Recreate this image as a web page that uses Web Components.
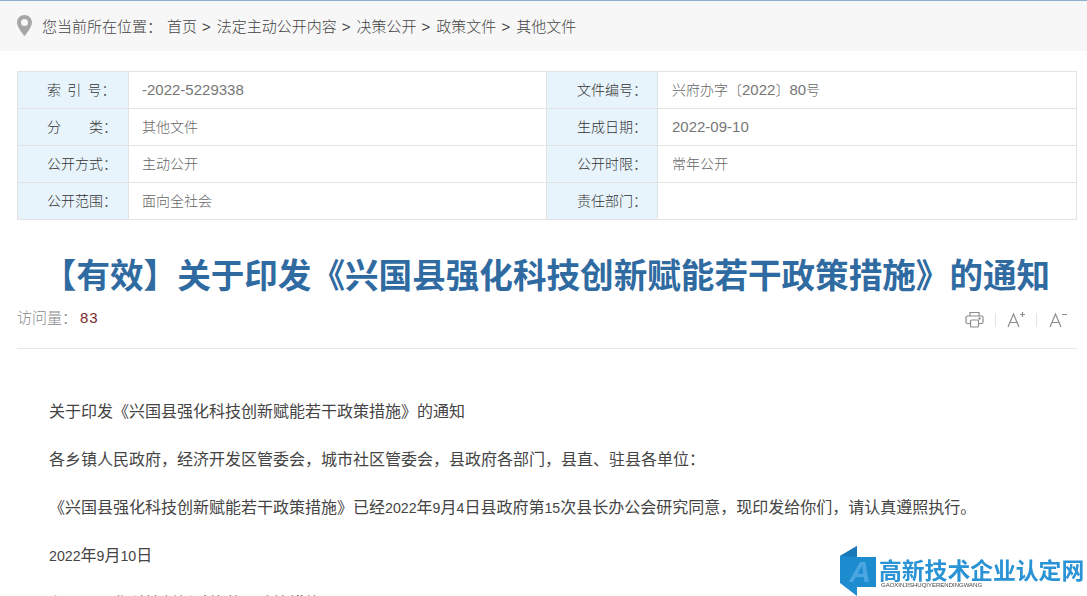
<!DOCTYPE html>
<html lang="zh-CN">
<head>
<meta charset="utf-8">
<title>关于印发《兴国县强化科技创新赋能若干政策措施》的通知</title>
<style>
    html, body { margin: 0; height: 100%; overflow: hidden; background: #fff; }
    body { font-family: "Noto Sans CJK SC", "Noto Sans", sans-serif; font-weight: 300; color: #333; }
    /* digits in the source page are wider in the table, narrower in the article */
    meta-cell .n { font-family: "Liberation Sans", sans-serif; font-size: 15px; line-height: 1; color: #777; }
    article-body .n { font-family: "Liberation Sans", sans-serif; font-size: 14.2px; line-height: 1; }
</style>
</head>
<body>
<crumb-bar>
    <span>首页</span><span>法定主动公开内容</span><span>决策公开</span><span>政策文件</span><span>其他文件</span>
</crumb-bar>

<meta-table>
    <meta-cell label="索  引  号："><span class="n">-2022-5229338</span></meta-cell>
    <meta-cell label="文件编号：">兴府办字〔<span class="n">2022</span>〕<span class="n">80</span>号</meta-cell>
    <meta-cell label="分　　类：">其他文件</meta-cell>
    <meta-cell label="生成日期："><span class="n">2022-09-10</span></meta-cell>
    <meta-cell label="公开方式：">主动公开</meta-cell>
    <meta-cell label="公开时限：">常年公开</meta-cell>
    <meta-cell label="公开范围：">面向全社会</meta-cell>
    <meta-cell label="责任部门："></meta-cell>
</meta-table>

<article-title>【有效】关于印发《兴国县强化科技创新赋能若干政策措施》的通知</article-title>
<article-tools count="83"></article-tools>

<article-body>
    <p>关于印发《兴国县强化科技创新赋能若干政策措施》的通知</p>
    <p>各乡镇人民政府，经济开发区管委会，城市社区管委会，县政府各部门，县直、驻县各单位：</p>
    <p>《兴国县强化科技创新赋能若干政策措施》已经<span class="n">2022</span>年<span class="n">9</span>月<span class="n">4</span>日县政府第<span class="n">15</span>次县长办公会研究同意，现印发给你们，请认真遵照执行。</p>
    <p><span class="n">2022</span>年<span class="n">9</span>月<span class="n">10</span>日</p>
    <p>兴国县强化科技创新赋能若干政策措施</p>
</article-body>

<site-mark></site-mark>

<script>
// breadcrumb strip at the top of the page
class CrumbBar extends HTMLElement {
    constructor() {
        super();
        this.attachShadow({ mode: 'open' });
        this.shadowRoot.innerHTML = `
            <style>
                :host { display: flex; align-items: center; height: 48px; padding: 0 0 2px 17px;
                    background: #f7f7f7; border-top: 1px solid #8fb0cc;
                    font-size: 15px; color: #444; }
                svg { width: 15px; height: 21px; margin-right: 10px; flex: none; }
                .here { margin-right: 5px; }
                ::slotted(span:not(:last-child))::after { content: ">"; margin: 0 6px 0 5px; font-family: "Liberation Sans", sans-serif; }
            </style>
            <svg viewBox="0 0 15 21"><path fill="#a6a6a6" fill-rule="evenodd" d="M7.500 0C3.400 0 0 3.300 0 7.400 0 12.300 7.500 21 7.500 21S15 12.300 15 7.400C15 3.300 11.600 0 7.500 0zm0 3.900a3.500 3.500 0 1 1 0 7 3.500 3.500 0 0 1 0-7z"/></svg>
            <span class="here">您当前所在位置：</span>
            <slot></slot>
        `;
    }
}

// two column file info table
class MetaTable extends HTMLElement {
    constructor() {
        super();
        this.attachShadow({ mode: 'open' });
        this.shadowRoot.innerHTML = `
            <style>
                :host { display: grid; grid-template-columns: 529px 530px; grid-auto-rows: 37px;
                    margin: 20px 10px 0 17px; border-top: 1px solid #e3e3e3; border-left: 1px solid #e3e3e3;
                    width: 1060px; box-sizing: border-box; }
            </style>
            <slot></slot>
        `;
    }
}

class MetaCell extends HTMLElement {
    constructor() {
        super();
        this.attachShadow({ mode: 'open' });
        this.shadowRoot.innerHTML = `
            <style>
                :host { display: grid; grid-template-columns: 111px 1fr; font-size: 14px; --shift: 0px; }
                :host(:nth-child(even)) { --shift: 1px; }
                div { display: flex; align-items: center; border-right: 1px solid #e3e3e3; border-bottom: 1px solid #e3e3e3; padding-bottom: 2px; }
                .label { background: #e8f4fc; color: #333; padding-left: calc(29px + var(--shift)); white-space: pre; }
                .value { color: #666; padding-left: calc(13px + var(--shift)); white-space: pre; }
            </style>
            <div class="label"></div>
            <div class="value"><span><slot></slot></span></div>
        `;
        this.shadowRoot.querySelector('.label').textContent = this.getAttribute('label');
    }
}

class ArticleTitle extends HTMLElement {
    constructor() {
        super();
        this.attachShadow({ mode: 'open' });
        this.shadowRoot.innerHTML = `
            <style>
                :host { display: block; margin-top: 30px; text-align: center; font-size: 33.6px; line-height: 48px;
                    font-weight: 700; color: #2f6ba1; white-space: nowrap; padding-left: 6px; }
            </style>
            <slot></slot>
        `;
    }
}

// visit counter, print and font size buttons
class ArticleTools extends HTMLElement {
    constructor() {
        super();
        this.attachShadow({ mode: 'open' });
        const count = this.getAttribute('count');
        this.shadowRoot.innerHTML = `
            <style>
                :host { display: flex; align-items: center; justify-content: space-between; height: 50px;
                    margin: 0 10px 0 17px; border-bottom: 1px solid #e8e8e8; }
                .visits { font-size: 15px; color: #888; margin-top: -13px; }
                .visits b { font-weight: 400; color: #7a2a2a; font-family: "Liberation Sans", sans-serif; letter-spacing: 1px; margin-left: 3px; }
                .tools { display: flex; align-items: center; margin-top: -7px; margin-right: 9px; }
                .tools svg { display: block; fill: none; stroke: #8c8c8c; stroke-width: 1.2; }
                .sep { width: 1px; height: 14px; background: #e4e4e4; margin: 0 11px; }
            </style>
            <div class="visits">访问量：<b>${count}</b></div>
            <div class="tools">
                <svg width="19" height="19" viewBox="0 0 19 19"><path d="M5 6V2.500h9V6M5 13.500H2.500a1.500 1.500 0 0 1-1.500-1.500V7.500A1.500 1.500 0 0 1 2.500 6h14A1.500 1.500 0 0 1 18 7.500V12a1.500 1.500 0 0 1-1.500 1.500H14"/><rect x="5.500" y="10" width="8" height="7" rx="1"/><circle cx="14.500" cy="8.500" r=".6"/></svg>
                <span class="sep"></span>
                <svg width="19" height="17" viewBox="0 0 19 17"><path d="M1 16 6.500 3 12 16M3 11.500h7M13 3.500h5M15.500 1v5"/></svg>
                <span class="sep" style="margin-left:10px;margin-right:12px"></span>
                <svg width="19" height="17" viewBox="0 0 19 17"><path d="M1 16 6.500 3 12 16M3 11.500h7M13 3.500h5"/></svg>
            </div>
        `;
    }
}

class ArticleBody extends HTMLElement {
    constructor() {
        super();
        this.attachShadow({ mode: 'open' });
        this.shadowRoot.innerHTML = `
            <style>
                :host { display: block; padding: 37px 10px 0 49px; font-size: 16px; line-height: 48px; color: #444;
                    font-weight: 400; font-family: "Noto Sans CJK SC", sans-serif; }
                ::slotted(p) { margin: 0; white-space: nowrap; }
            </style>
            <slot></slot>
        `;
    }
}

// watermark logo in the bottom right corner, floats over the article
class SiteMark extends HTMLElement {
    constructor() {
        super();
        this.attachShadow({ mode: 'open' });
        this.shadowRoot.innerHTML = `
            <style>
                :host { position: fixed; left: 840px; top: 546px; width: 247px; height: 50px; display: block; }
                svg { position: absolute; left: 0; top: 0; }
                .name { position: absolute; left: 39px; top: 12px; font-size: 22.8px; line-height: 24px; font-weight: 700;
                    color: #2a93d5; white-space: nowrap; }
                .pin { position: absolute; left: 41px; top: 36px; font: 400 6px/7px "Liberation Sans", sans-serif; color: #444; white-space: nowrap; }
            </style>
            <svg width="38" height="50" viewBox="0 0 38 50">
                <path fill="#1d8ccf" d="M0 10 17 0v11h19v30H17v9L0 37z"/>
                <path fill="#1a78ba" d="M0 10 17 0v11z"/>
                <text x="20" y="36" text-anchor="middle" font-family="Liberation Sans, sans-serif" font-size="30" font-weight="700" font-style="italic" fill="#4aa6e0">A</text>
            </svg>
            <div class="name">高新技术企业认定网</div>
            <div class="pin">GAOXINJISHUQIYERENDINGWANG</div>
        `;
    }
}

customElements.define('crumb-bar', CrumbBar);
customElements.define('meta-table', MetaTable);
customElements.define('meta-cell', MetaCell);
customElements.define('article-title', ArticleTitle);
customElements.define('article-tools', ArticleTools);
customElements.define('article-body', ArticleBody);
customElements.define('site-mark', SiteMark);
</script>
</body>
</html>
